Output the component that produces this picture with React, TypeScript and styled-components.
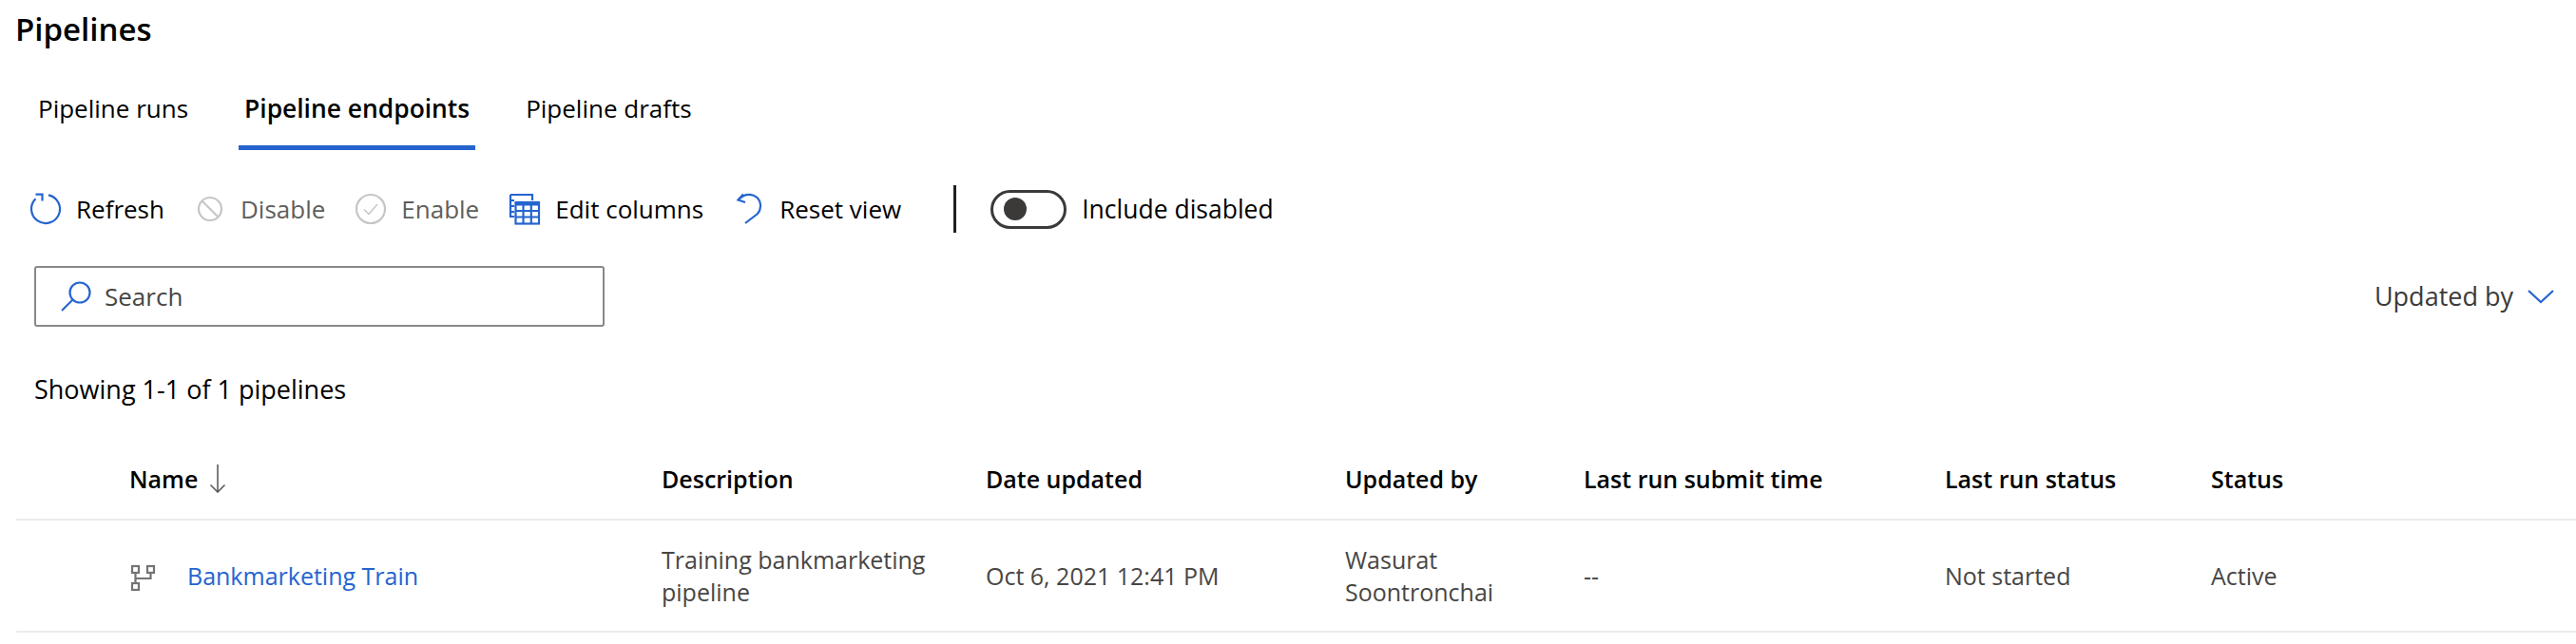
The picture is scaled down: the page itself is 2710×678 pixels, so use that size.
import React from 'react';
import styled, { createGlobalStyle } from 'styled-components';

const GlobalStyle = createGlobalStyle`
  html, body {
    margin: 0;
    background: #ffffff;
  }
  * {
    box-sizing: border-box;
  }
`;

const Page = styled.div`
  width: 2710px;
  height: 678px;
  overflow: hidden;
  font-family: 'Open Sans', 'Noto Sans', sans-serif;
  font-size: 25px;
  line-height: 34px;
  color: #000000;
`;

const Title = styled.h1`
  margin: 0;
  padding-left: 16px;
  font-size: 33px;
  font-weight: 600;
  line-height: 62px;
`;

const Tabs = styled.div`
  display: flex;
  gap: 47px;
  margin: 12px 0 0 34px;
  font-size: 26px;
`;

const Tab = styled.div<{ $active?: boolean }>`
  height: 84px;
  padding: 23px 6px 0;
  font-size: ${(p) => (p.$active ? '26.4px' : '26px')};
  font-weight: ${(p) => (p.$active ? 600 : 400)};
  border-bottom: 5px solid ${(p) => (p.$active ? '#2564cf' : 'transparent')};
  white-space: nowrap;
`;

const Toolbar = styled.div`
  display: flex;
  align-items: center;
  gap: 31px;
  height: 50px;
  margin-top: 37px;
  padding-left: 31px;
  font-size: 26px;
`;

const ToolButton = styled.div<{ $disabled?: boolean }>`
  display: flex;
  align-items: center;
  gap: 15px;
  white-space: nowrap;
  color: ${(p) => (p.$disabled ? '#605e5c' : '#000000')};
`;

const IconBox = styled.svg`
  display: block;
  width: 34px;
  height: 34px;
  flex: none;
  fill: none;
  stroke-width: 2.2;
`;

const Separator = styled.div`
  width: 3px;
  height: 50px;
  margin-left: 24px;
  background: #201f1e;
`;

const ToggleRow = styled.div`
  display: flex;
  align-items: center;
  gap: 16px;
  margin-left: 5px;
  font-size: 26.5px;
  white-space: nowrap;
`;

const ToggleTrack = styled.div`
  display: flex;
  align-items: center;
  width: 80px;
  height: 41px;
  padding-left: 11px;
  border: 3px solid #3b3a39;
  border-radius: 21px;
`;

const ToggleKnob = styled.div`
  width: 24px;
  height: 24px;
  border-radius: 50%;
  background: #3b3a39;
`;

const FilterRow = styled.div`
  display: flex;
  align-items: center;
  justify-content: space-between;
  height: 64px;
  margin-top: 35px;
  padding: 0 20px 0 36px;
`;

const SearchBox = styled.div`
  display: flex;
  align-items: center;
  gap: 13px;
  width: 600px;
  height: 64px;
  padding-left: 25px;
  border: 2px solid #8a8886;
  border-radius: 3px;
  font-size: 26px;
  color: #484644;
`;

const FilterButton = styled.div`
  display: flex;
  align-items: center;
  gap: 12px;
  font-size: 27px;
  color: #3b3a39;
`;

const Count = styled.div`
  margin: 48px 0 0 36px;
  font-size: 27px;
  line-height: 36px;
`;

const GridRow = styled.div<{ $height: number }>`
  display: grid;
  grid-template-columns: 679px 341px 378px 251px 380px 280px 1fr;
  align-items: center;
  height: ${(p) => p.$height}px;
  margin-left: 17px;
  border-bottom: 2px solid #edebe9;
`;

const HeaderRow = styled(GridRow)`
  margin-top: 32px;
  padding-top: 2px;
  font-weight: 600;
`;

const BodyRow = styled(GridRow)`
  color: #484644;
`;

const NameCell = styled.div`
  display: flex;
  align-items: center;
  gap: 4px;
  padding-left: 119px;
`;

const Cell = styled.div<{ $wrap?: number }>`
  max-width: ${(p) => (p.$wrap ? `${p.$wrap}px` : 'none')};
`;

const PipelineLink = styled.a`
  margin-left: 23px;
  color: #2564cf;
  text-decoration: none;
`;

const RefreshIcon = () => (
  <IconBox viewBox="0 0 34 34" stroke="#2564cf">
    <path d="M20 2.3A15 15 0 1 1 6.5 6.3" />
    <path d="M6.5 1.6H13.5V8.6" />
  </IconBox>
);

const DisableIcon = () => (
  <IconBox viewBox="0 0 34 34" stroke="#c8c6c4">
    <circle cx="17" cy="17" r="12" />
    <path d="M8.5 8.5L25.5 25.5" />
  </IconBox>
);

const EnableIcon = () => (
  <IconBox viewBox="0 0 34 34" stroke="#c8c6c4">
    <circle cx="17" cy="17" r="15" />
    <path d="M10 17.5L15 22.5L24 12" strokeWidth="1.5" />
  </IconBox>
);

const EditColumnsIcon = () => (
  <IconBox viewBox="0 0 34 34" stroke="#2564cf">
    <path d="M2 2H25V8M2 2V25H6" />
    <path d="M2 8H6M2 14H6M2 20H6" />
    <rect x="7.5" y="10" width="24.5" height="22.5" />
    <path d="M7.5 11.5H32" strokeWidth="4" />
    <path d="M7.5 19H32M7.5 25.5H32M15.5 12V32M23.8 12V32" />
  </IconBox>
);

const ResetIcon = () => (
  <IconBox viewBox="0 0 34 34" stroke="#2564cf">
    <path d="M6 7C10 3 15 .8 21 2.5C30 5.5 31 16 26 22L13 32" />
    <path d="M11 1.5L5.5 7.5L13 10" />
  </IconBox>
);

const SearchIcon = () => (
  <IconBox viewBox="0 0 34 34" stroke="#2564cf">
    <circle cx="21" cy="13" r="10.5" />
    <path d="M13.5 20.5L2 32" />
  </IconBox>
);

const ChevronIcon = () => (
  <IconBox viewBox="0 0 34 34" stroke="#2564cf">
    <path d="M4 11L17 23L30 11" />
  </IconBox>
);

const SortIcon = () => (
  <IconBox viewBox="0 0 34 34" stroke="#605e5c">
    <path d="M17 2V31M9.5 23.5L17 31L24.5 23.5" strokeWidth="1.6" />
  </IconBox>
);

const PipelineIcon = () => (
  <IconBox viewBox="0 0 34 34" stroke="#737373">
    <rect x="3" y="7" width="7" height="7" />
    <rect x="19" y="7" width="7" height="7" />
    <rect x="3" y="25" width="7" height="7" />
    <path d="M6.5 14V25M6.5 20H22.5V14" />
  </IconBox>
);

const App: React.FC = () => (
  <Page>
    <GlobalStyle />
    <Title>Pipelines</Title>
    <Tabs>
      <Tab>Pipeline runs</Tab>
      <Tab $active>Pipeline endpoints</Tab>
      <Tab>Pipeline drafts</Tab>
    </Tabs>
    <Toolbar>
      <ToolButton><RefreshIcon />Refresh</ToolButton>
      <ToolButton $disabled><DisableIcon />Disable</ToolButton>
      <ToolButton $disabled><EnableIcon />Enable</ToolButton>
      <ToolButton><EditColumnsIcon />Edit columns</ToolButton>
      <ToolButton><ResetIcon />Reset view</ToolButton>
      <Separator />
      <ToggleRow>
        <ToggleTrack><ToggleKnob /></ToggleTrack>
        Include disabled
      </ToggleRow>
    </Toolbar>
    <FilterRow>
      <SearchBox><SearchIcon />Search</SearchBox>
      <FilterButton>Updated by <ChevronIcon /></FilterButton>
    </FilterRow>
    <Count>Showing 1-1 of 1 pipelines</Count>
    <HeaderRow $height={88}>
      <NameCell>Name <SortIcon /></NameCell>
      <Cell>Description</Cell>
      <Cell>Date updated</Cell>
      <Cell>Updated by</Cell>
      <Cell>Last run submit time</Cell>
      <Cell>Last run status</Cell>
      <Cell>Status</Cell>
    </HeaderRow>
    <BodyRow $height={118}>
      <NameCell>
        <PipelineIcon />
        <PipelineLink href="#">Bankmarketing Train</PipelineLink>
      </NameCell>
      <Cell $wrap={300}>Training bankmarketing pipeline</Cell>
      <Cell>Oct 6, 2021 12:41 PM</Cell>
      <Cell $wrap={170}>Wasurat Soontronchai</Cell>
      <Cell>--</Cell>
      <Cell>Not started</Cell>
      <Cell>Active</Cell>
    </BodyRow>
  </Page>
);

export default App;
